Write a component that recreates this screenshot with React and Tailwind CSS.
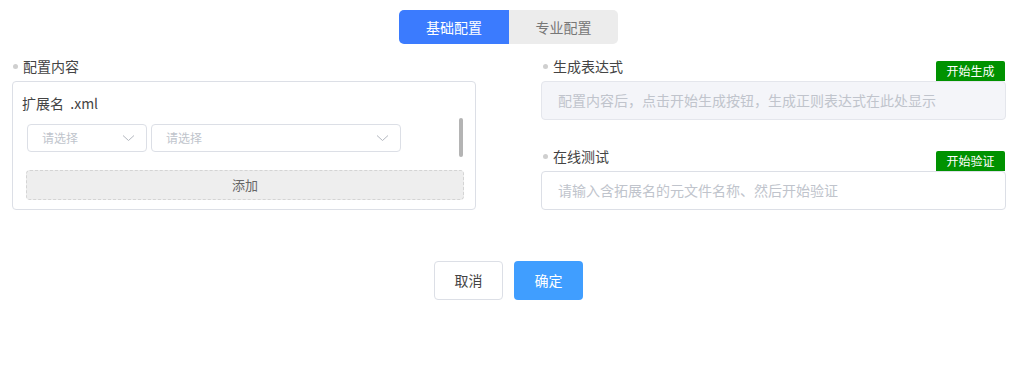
const font = { fontFamily: '"Microsoft YaHei", "Noto Sans CJK SC", "Liberation Sans", sans-serif' };

const Label = ({ text }) => (
  <div className="flex items-center h-[16px] gap-[5px]">
    <span className="w-[5px] h-[5px] rounded-full bg-[#cfcfcf]" />
    <span className="text-[14px] text-[#444]">{text}</span>
  </div>
);

const Chevron = () => (
  <svg width="13" height="8" viewBox="0 0 13 8" fill="none">
    <polyline points="1,1.5 6.5,6.5 12,1.5" stroke="#b4b8c0" strokeWidth="1" />
  </svg>
);

const Select = ({ width }) => (
  <div
    className={`${width} h-[28px] flex items-center justify-between pl-[14px] pr-[11px] border border-[#dcdfe6] rounded-[4px] bg-white`}
  >
    <span className="text-[12px] text-[#c0c4cc]">请选择</span>
    <Chevron />
  </div>
);

const GreenBtn = ({ text }) => (
  <div className="w-[69px] h-[20px] flex items-center justify-center bg-[#009200] text-white text-[12px] rounded-t-[2px]">
    {text}
  </div>
);

export default function App() {
  return (
    <div className="w-[1022px] h-[366px] bg-white" style={font}>
      {/* tabs */}
      <div className="pt-[10px] pl-[399px] flex">
        <div className="w-[110px] h-[34px] flex items-center justify-center bg-[#3b7bfe] text-white text-[14px] rounded-l-[5px]">
          基础配置
        </div>
        <div className="w-[109px] h-[34px] flex items-center justify-center bg-[#ececec] text-[#777] text-[14px] rounded-r-[5px]">
          专业配置
        </div>
      </div>

      <div className="flex pl-[12px] pt-[14px] gap-[65px]">
        {/* left column */}
        <div className="w-[464px]">
          <div className="pl-[1px] h-[23px]">
            <Label text="配置内容" />
          </div>
          <div className="h-[129px] border border-[#dcdfe6] rounded-[4px] pl-[9px] pt-[12px] pr-[12px]">
            <div className="text-[14px] text-[#444] h-[18px] leading-[18px]">扩展名&nbsp;&nbsp;.xml</div>
            <div className="flex items-start mt-[12px] pl-[5px]">
              <div className="flex gap-[4px]">
                <Select width="w-[120px]" />
                <Select width="w-[250px]" />
              </div>
              <div className="ml-[58px] w-[6px] h-[39px] -mt-[6px] rounded-[3px] bg-[#b4b4b4]" />
            </div>
            <div className="mt-[13px] ml-[4px] w-[438px] h-[30px] border border-dashed border-[#d4d4d4] rounded-[4px] bg-[#eeeeee] flex items-center justify-center text-[13px] text-[#666]">
              添加
            </div>
          </div>
        </div>

        {/* right column */}
        <div className="w-[465px]">
          <div className="flex items-end justify-between h-[23px] pr-[1px]">
            <div className="pl-[2px] pb-[7px]">
              <Label text="生成表达式" />
            </div>
            <GreenBtn text="开始生成" />
          </div>
          <div className="h-[39px] bg-[#f4f5f9] border border-[#e4e6ec] rounded-[4px] flex items-center pl-[16px] text-[14px] text-[#c0c4cc]">
            配置内容后，点击开始生成按钮，生成正则表达式在此处显示
          </div>

          <div className="flex items-end justify-between h-[23px] pr-[1px] mt-[28px]">
            <div className="pl-[2px] pb-[7px]">
              <Label text="在线测试" />
            </div>
            <GreenBtn text="开始验证" />
          </div>
          <div className="h-[39px] bg-white border border-[#dcdfe6] rounded-[4px] flex items-center pl-[16px] text-[14px] text-[#c0c4cc]">
            请输入含拓展名的元文件名称、然后开始验证
          </div>
        </div>
      </div>

      {/* footer buttons */}
      <div className="flex gap-[11px] pl-[434px] mt-[51px]">
        <div className="w-[69px] h-[39px] border border-[#dcdfe6] rounded-[4px] flex items-center justify-center text-[14px] text-[#444]">
          取消
        </div>
        <div className="w-[69px] h-[39px] bg-[#409eff] rounded-[4px] flex items-center justify-center text-[14px] text-white">
          确定
        </div>
      </div>
    </div>
  );
}
